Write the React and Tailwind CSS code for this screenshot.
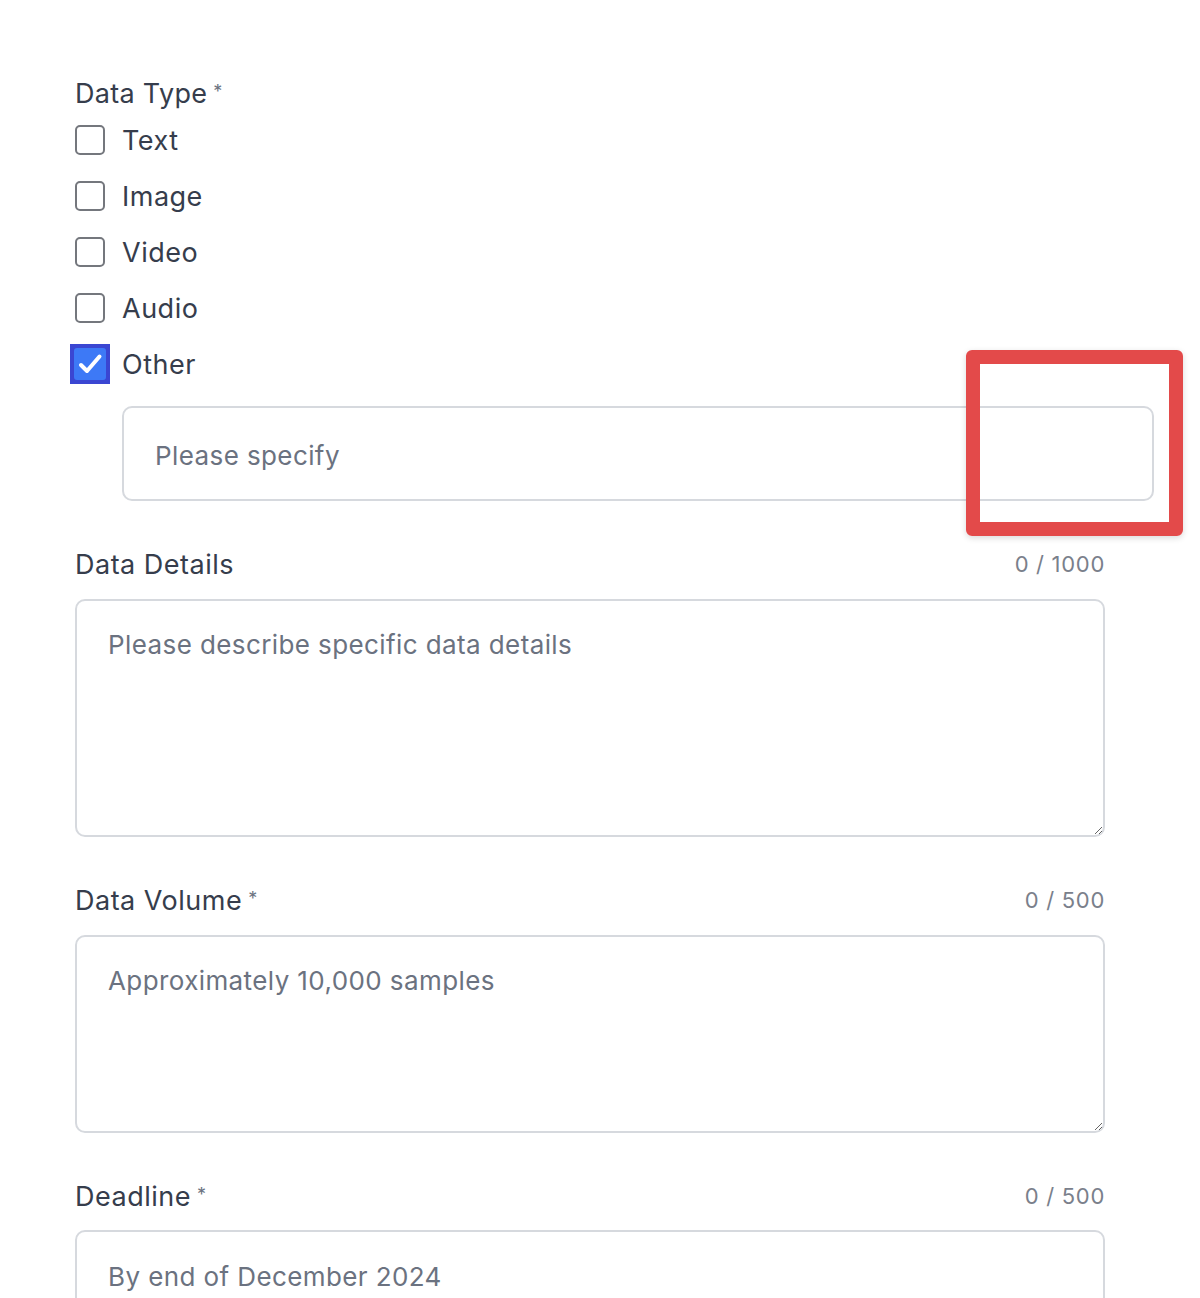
import React from "react";

const font = { fontFamily: "Inter, 'Noto Sans', sans-serif" };

function Star() {
  return <span className="ml-[6px] -mt-[3px] text-[18px] leading-[24px] text-[#6b7280]">*</span>;
}

function Label({ text, required, counter }) {
  return (
    <div className="flex h-[40px] items-center justify-between">
      <div className="flex items-center">
        <span className="text-[27px] leading-[39px] tracking-[0.5px] text-[#363d4c]">{text}</span>
        {required && <Star />}
      </div>
      {counter && <span className="text-[22px] leading-[30px] tracking-[0.7px] text-[#7a808b]">{counter}</span>}
    </div>
  );
}

function Box({ checked }) {
  if (checked) {
    return (
      <div className="flex h-[40px] w-[40px] shrink-0 items-center justify-center bg-[#3a46d2] p-[4px] -ml-[5px] mr-[-5px]">
        <div className="flex h-full w-full items-center justify-center rounded-[3px] bg-[#3d79f6]">
          <svg width="26" height="26" viewBox="0 0 26 26" fill="none">
            <path d="M4 14l6 6L22.5 5.5" stroke="white" strokeWidth="4" strokeLinecap="round" strokeLinejoin="round" />
          </svg>
        </div>
      </div>
    );
  }
  return <div className="h-[30px] w-[30px] shrink-0 rounded-[5px] border-2 border-[#74777d] bg-white" />;
}

function Row({ text, checked }) {
  return (
    <div className="flex h-[56px] items-center gap-[17px]">
      <Box checked={checked} />
      <span className="text-[27px] leading-[39px] tracking-[0.5px] text-[#363d4c]">{text}</span>
    </div>
  );
}

const field =
  "box-border block w-full rounded-[10px] border-2 border-[#d6d9de] bg-white px-[31px] text-[26px] tracking-[0.4px] text-[#363d4c] outline-none placeholder:text-[#6b7280]";

export default function App() {
  return (
    <div className="relative min-h-[1298px] overflow-hidden bg-white" style={font}>
      <div className="w-[1030px] ml-[75px] pt-[75px]">
        <div className="flex h-[37px] items-center">
          <span className="text-[27px] leading-[39px] tracking-[0.3px] text-[#363d4c]">Data Type</span>
          <Star />
        </div>
        <Row text="Text" />
        <Row text="Image" />
        <Row text="Video" />
        <Row text="Audio" />
        <Row text="Other" checked />
        <div className="mt-[14px] ml-[47px] w-[1032px]">
          <input className={`${field} h-[95px] pt-[3px]`} placeholder="Please specify" />
        </div>

        <div className="mt-[43px]">
          <Label text="Data Details" counter="0 / 1000" />
          <textarea
            className={`${field} mt-[15px] h-[238px] py-[24px] leading-[39px]`}
            placeholder="Please describe specific data details"
          />
        </div>

        <div className="mt-[43px]">
          <Label text="Data Volume" required counter="0 / 500" />
          <textarea
            className={`${field} mt-[15px] h-[198px] py-[24px] leading-[39px]`}
            placeholder="Approximately 10,000 samples"
          />
        </div>

        <div className="mt-[43px]">
          <Label text="Deadline" required counter="0 / 500" />
          <input className={`${field} mt-[14px] h-[95px] pb-[2px]`} placeholder="By end of December 2024" />
        </div>
      </div>

      <div className="pointer-events-none absolute left-[966px] top-[350px] h-[186px] w-[217px] rounded-[6px] border-[14px] border-[#e34a4a] shadow-[0_2px_6px_rgba(0,0,0,0.15)]" />
    </div>
  );
}
